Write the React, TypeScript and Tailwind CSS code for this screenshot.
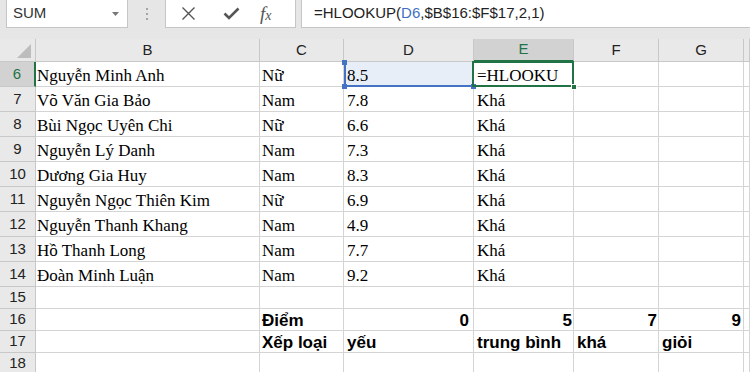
import React from "react";

const rows = [
  { n: 6, b: "Nguyễn Minh Anh", c: "Nữ", d: "8.5", e: "=HLOOKU" },
  { n: 7, b: "Võ Văn Gia Bảo", c: "Nam", d: "7.8", e: "Khá" },
  { n: 8, b: "Bùi Ngọc Uyên Chi", c: "Nữ", d: "6.6", e: "Khá" },
  { n: 9, b: "Nguyễn Lý Danh", c: "Nam", d: "7.3", e: "Khá" },
  { n: 10, b: "Dương Gia Huy", c: "Nam", d: "8.3", e: "Khá" },
  { n: 11, b: "Nguyễn Ngọc Thiên Kim", c: "Nữ", d: "6.9", e: "Khá" },
  { n: 12, b: "Nguyễn Thanh Khang", c: "Nam", d: "4.9", e: "Khá" },
  { n: 13, b: "Hồ Thanh Long", c: "Nam", d: "7.7", e: "Khá" },
  { n: 14, b: "Đoàn Minh Luận", c: "Nam", d: "9.2", e: "Khá" },
];

const sans = "font-['Liberation_Sans',Arial,sans-serif]";
const serif = "font-['Liberation_Serif','Times_New_Roman',serif]";

const base = "border-r border-b border-[#d4d4d4] bg-white flex items-center whitespace-nowrap";
const cell = `${base} overflow-hidden`;
const rowHead =
  "border-r border-b border-[#c8c8c8] bg-[#e9e9e9] flex items-center justify-center text-[15px] text-[#222]";

function Toolbar() {
  return (
    <div className="h-[39px] bg-[#e6e6e6] flex">
      <div className="ml-[6px] w-[122px] h-[28px] bg-white border border-t-0 border-[#c6c6c6] flex items-center justify-between pl-[6px] pr-[8px]">
        <span className={`${sans} text-[15px] text-[#333]`}>SUM</span>
        <svg width="7" height="4" viewBox="0 0 7 4">
          <path d="M0 0h7L3.5 4z" fill="#777" />
        </svg>
      </div>
      <div className="w-[37px] h-[28px] flex flex-col items-center justify-center gap-[3px]">
        <span className="w-[2px] h-[2px] bg-[#a5a5a5]" />
        <span className="w-[2px] h-[2px] bg-[#a5a5a5]" />
        <span className="w-[2px] h-[2px] bg-[#a5a5a5]" />
      </div>
      <div className="w-[131px] h-[28px] bg-white border border-t-0 border-[#c6c6c6] flex items-center">
        <svg className="ml-[15px]" width="15" height="15" viewBox="0 0 15 15">
          <path d="M1.5 1.5l12 12M13.5 1.5l-12 12" stroke="#555" strokeWidth="1.4" fill="none" />
        </svg>
        <svg className="ml-[27px]" width="17" height="13" viewBox="0 0 17 13">
          <path d="M1.5 6.5l4.5 4.5L15.5 1.5" stroke="#555" strokeWidth="2.6" fill="none" />
        </svg>
        <span className={`${serif} italic text-[19px] text-[#555] ml-[20px] leading-none`}>
          f<span className="text-[14px]">x</span>
        </span>
      </div>
      <div className="ml-[5px] flex-1 h-[28px] bg-white border border-t-0 border-r-0 border-[#c6c6c6] flex items-center pl-[12px]">
        <span className={`${sans} text-[15px] text-[#222]`}>
          =HLOOKUP(<span className="text-[#3f6fc4]">D6</span>,$B$16:$F$17,2,1)
        </span>
      </div>
    </div>
  );
}

function Header() {
  const colHead =
    "border-r border-b border-[#c8c8c8] bg-[#e9e9e9] flex items-center justify-center text-[15px] text-[#222]";
  return (
    <>
      <div className={`${colHead} relative justify-end items-end`}>
        <svg className="mr-[4px] mb-[3px]" width="14" height="14" viewBox="0 0 14 14">
          <path d="M14 0V14H0z" fill="#bdbdbd" />
        </svg>
      </div>
      <div className={colHead}>B</div>
      <div className={colHead}>C</div>
      <div className={colHead}>D</div>
      <div className="border-r border-b-2 border-r-[#c8c8c8] border-b-[#217346] bg-[#d2d2d2] flex items-center justify-center text-[15px] text-[#217346]">
        E
      </div>
      <div className={colHead}>F</div>
      <div className={colHead}>G</div>
      <div className={colHead}></div>
    </>
  );
}

export default function App() {
  return (
    <div className={`w-[750px] h-[372px] overflow-hidden bg-white ${sans}`}>
      <Toolbar />
      <div className="grid grid-cols-[36px_224px_84px_130px_100px_85px_85px_1fr] grid-rows-[23px_repeat(9,25px)_repeat(4,22px)]">
        <Header />
        {rows.map((r) => {
          const sel = r.n === 6;
          return (
            <React.Fragment key={r.n}>
              {sel ? (
                <div className="border-r-2 border-b border-r-[#217346] border-b-[#c8c8c8] bg-[#d2d2d2] flex items-center justify-center text-[15px] text-[#217346]">
                  {r.n}
                </div>
              ) : (
                <div className={rowHead}>{r.n}</div>
              )}
              <div className={`${cell} ${serif} text-[17px] pl-[1px] pt-[3px]`}>{r.b}</div>
              <div className={`${cell} ${serif} text-[17px] pl-[2px] pt-[3px]`}>{r.c}</div>
              {sel ? (
                <div className={`${base} ${serif} text-[17px] pl-[3px] pt-[3px] relative !bg-[#e8eef8]`}>
                  {r.d}
                  <span className="absolute z-10 left-0 top-0 bottom-[-1px] w-[2px] bg-[#4472c4]" />
                  <span className="absolute z-10 left-0 right-[-1px] bottom-[-1px] h-[2px] bg-[#4472c4]" />
                  <span className="absolute z-10 left-[-2px] top-[-2px] w-[5px] h-[5px] bg-[#4472c4]" />
                  <span className="absolute z-10 left-[-2px] bottom-[-3px] w-[5px] h-[5px] bg-[#4472c4]" />
                  <span className="absolute z-10 right-[-3px] bottom-[-3px] w-[5px] h-[5px] bg-[#4472c4]" />
                </div>
              ) : (
                <div className={`${cell} ${serif} text-[17px] pl-[3px] pt-[3px]`}>{r.d}</div>
              )}
              {sel ? (
                <div className={`${base} ${serif} text-[17px] pl-[3px] pt-[3px] relative`}>
                  {r.e}
                  <span className="absolute z-20 left-[-2px] top-[-1px] right-[-1px] bottom-[-1px] border-2 border-[#217346]" />
                  <span className="absolute z-20 right-[-4px] bottom-[-4px] w-[6px] h-[6px] bg-[#217346] border border-white" />
                </div>
              ) : (
                <div className={`${cell} ${serif} text-[17px] pl-[3px] pt-[3px]`}>{r.e}</div>
              )}
              <div className={cell}></div>
              <div className={cell}></div>
              <div className={cell}></div>
            </React.Fragment>
          );
        })}
        <div className={rowHead}>15</div>
        {Array.from({ length: 7 }).map((_, i) => (
          <div key={`e15${i}`} className={cell}></div>
        ))}
        <div className={rowHead}>16</div>
        <div className={cell}></div>
        <div className={`${cell} font-bold text-[17px] pl-[2px] pt-[2px]`}>Điểm</div>
        <div className={`${cell} font-bold text-[17px] justify-end pr-[4px] pt-[2px]`}>0</div>
        <div className={`${cell} font-bold text-[17px] justify-end pr-[1px] pt-[2px]`}>5</div>
        <div className={`${cell} font-bold text-[17px] justify-end pr-[1px] pt-[2px]`}>7</div>
        <div className={`${cell} font-bold text-[17px] justify-end pr-[2px] pt-[2px]`}>9</div>
        <div className={cell}></div>
        <div className={rowHead}>17</div>
        <div className={cell}></div>
        <div className={`${cell} font-bold text-[17px] pl-[2px] pt-[2px]`}>Xếp loại</div>
        <div className={`${cell} font-bold text-[17px] pl-[3px] pt-[2px]`}>yếu</div>
        <div className={`${cell} font-bold text-[17px] pl-[3px] pt-[2px]`}>trung bình</div>
        <div className={`${cell} font-bold text-[17px] pl-[3px] pt-[2px]`}>khá</div>
        <div className={`${cell} font-bold text-[17px] pl-[3px] pt-[2px]`}>giỏi</div>
        <div className={cell}></div>
        <div className={rowHead}>18</div>
        {Array.from({ length: 7 }).map((_, i) => (
          <div key={`e18${i}`} className={cell}></div>
        ))}
      </div>
    </div>
  );
}
